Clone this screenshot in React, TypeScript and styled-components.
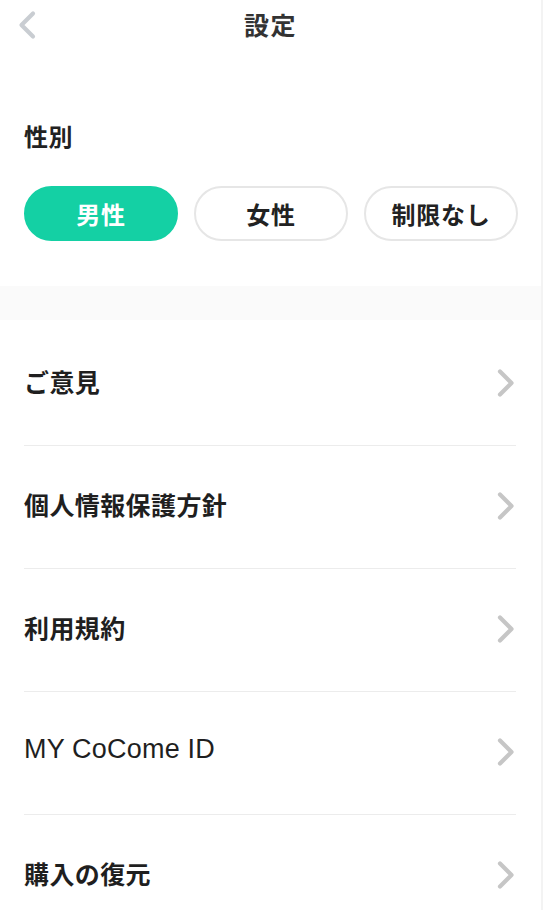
import { ReactElement, useState } from 'react';
import styled, { createGlobalStyle } from 'styled-components';

const GlobalStyle = createGlobalStyle`
  html, body {
    margin: 0;
    padding: 0;
    background: #ffffff;
  }
  body {
    font-family: "Noto Sans CJK JP", "Noto Sans", sans-serif;
    color: #222222;
  }
`;

const Page = styled.div`
  width: 543px;
  min-height: 910px;
  box-sizing: border-box;
  border-right: 2px solid #f3f3f3;
  background: #ffffff;
`;

const Header = styled.header`
  position: relative;
  height: 52px;
  display: flex;
  align-items: center;
  justify-content: center;
`;

const BackButton = styled.button`
  position: absolute;
  left: 14px;
  top: 8px;
  width: 26px;
  height: 34px;
  padding: 0;
  border: 0;
  background: none;
  display: flex;
  align-items: center;
  justify-content: center;
`;

const Title = styled.h1`
  margin: 0;
  margin-top: -4px;
  font-size: 25px;
  font-weight: 700;
  color: #333333;
  letter-spacing: 1.5px;
`;

const GenderSection = styled.section`
  padding: 67px 24px 45px 24px;
`;

const Label = styled.h2`
  margin: 0;
  font-size: 24px;
  line-height: 34px;
  font-weight: 700;
  color: #222222;
  letter-spacing: 0.5px;
`;

const Pills = styled.div`
  display: grid;
  grid-template-columns: repeat(3, 154px);
  gap: 16px;
  margin-top: 33px;
`;

const Pill = styled.button<{ $active: boolean }>`
  height: 55px;
  border-radius: 28px;
  box-sizing: border-box;
  border: 2px solid ${(p) => (p.$active ? '#14d0a4' : '#e6e6e6')};
  background: ${(p) => (p.$active ? '#14d0a4' : '#ffffff')};
  color: ${(p) => (p.$active ? '#ffffff' : '#222222')};
  font-family: "Noto Sans CJK JP", sans-serif;
  font-size: 24px;
  font-weight: 700;
  letter-spacing: 0.8px;
  padding: 0;
  cursor: pointer;
`;

const Band = styled.div`
  height: 34px;
  background: #fafafa;
`;

const List = styled.ul`
  list-style: none;
  margin: 0;
  padding: 3px 0 0 0;
`;

const Row = styled.li`
  margin: 0 25px 0 24px;
  height: 123px;
  box-sizing: border-box;
  border-bottom: 1.5px solid #ececec;
  display: flex;
  align-items: center;
  justify-content: space-between;
  padding-bottom: 7px;
`;

const RowLabel = styled.span<{ $latin?: boolean }>`
  font-family: ${(p) =>
    p.$latin ? '"Liberation Sans", "Noto Sans CJK JP", sans-serif' : '"Noto Sans CJK JP", sans-serif'};
  font-size: ${(p) => (p.$latin ? '27px' : '25px')};
  font-weight: ${(p) => (p.$latin ? 400 : 700)};
  letter-spacing: ${(p) => (p.$latin ? '0.2px' : '0.4px')};
  color: #1f1f1f;
`;

const ChevronBox = styled.span`
  display: flex;
  margin-top: 4px;
`;

const Chevron = () => (
  <ChevronBox>
    <svg width="20" height="30" viewBox="0 0 20 30" fill="none">
      <path d="M4 3.5 L15.5 15 L4 26.5" stroke="#c6c6c6" strokeWidth="4.2" strokeLinecap="round" strokeLinejoin="round" />
    </svg>
  </ChevronBox>
);

const BackChevron = () => (
  <svg width="22" height="30" viewBox="0 0 22 30" fill="none">
    <path d="M17 3.5 L5.5 15 L17 26.5" stroke="#c9cdd2" strokeWidth="4.2" strokeLinecap="round" strokeLinejoin="round" />
  </svg>
);

const genders = ['男性', '女性', '制限なし'];

const items: { label: string; latin?: boolean }[] = [
  { label: 'ご意見' },
  { label: '個人情報保護方針' },
  { label: '利用規約' },
  { label: 'MY CoCome ID', latin: true },
  { label: '購入の復元' },
];

export default function App(): ReactElement {
  const [gender, setGender] = useState('男性');

  return (
    <Page>
      <GlobalStyle />
      <Header>
        <BackButton aria-label="戻る">
          <BackChevron />
        </BackButton>
        <Title>設定</Title>
      </Header>

      <GenderSection>
        <Label>性別</Label>
        <Pills>
          {genders.map((g) => (
            <Pill key={g} $active={gender === g} onClick={() => setGender(g)}>
              {g}
            </Pill>
          ))}
        </Pills>
      </GenderSection>

      <Band />

      <List>
        {items.map((item) => (
          <Row key={item.label}>
            <RowLabel $latin={item.latin}>{item.label}</RowLabel>
            <Chevron />
          </Row>
        ))}
      </List>
    </Page>
  );
}
